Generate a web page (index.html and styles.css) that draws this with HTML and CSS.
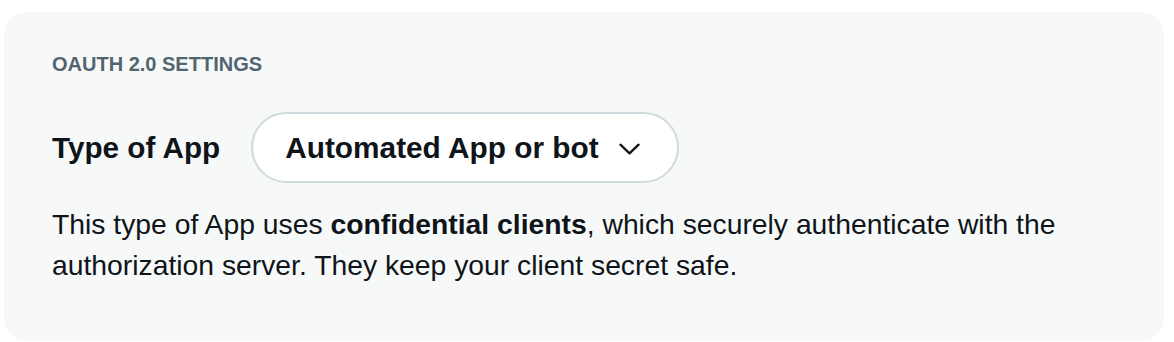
FILE: index.html
```html
<!DOCTYPE html>
<html lang="en">
<head>
  <meta charset="UTF-8">
  <meta name="viewport" content="width=device-width, initial-scale=1.0">
  <title>OAuth 2.0 Settings</title>
  <link rel="stylesheet" href="styles.css">
</head>
<body>

  <!-- Settings Card -->
  <section class="settings-card">
    <h2 class="section-title">OAUTH 2.0 SETTINGS</h2>

    <div class="app-type-row">
      <span class="app-type-label">Type of App</span>
      <button class="app-type-select">
        <span>Automated App or bot</span>
        <svg class="chevron" viewBox="0 0 22 12" width="21" height="12" aria-hidden="true">
          <path d="M1.5 1.5L11 10.5 20.5 1.5" fill="none" stroke="#0f1419" stroke-width="2.4" stroke-linecap="round" stroke-linejoin="round"/>
        </svg>
      </button>
    </div>

    <p class="app-type-desc">
      This type of App uses <strong>confidential clients</strong>, which securely authenticate with the
      authorization server. They keep your client secret safe.
    </p>
  </section>

</body>
</html>
```

FILE: styles.css
```css
/* Basic Reset */
* {
  margin: 0;
  padding: 0;
  box-sizing: border-box;
}

body {
  background-color: #fff;
  font-family: 'Liberation Sans', Arial, sans-serif;
  color: #0f1419;
  padding: 12px 10px 0 4px;
}

/* Settings Card */
.settings-card {
  background-color: #f7f9f9;
  border-radius: 22px;
  padding: 40px 60px 0 48px;
  height: 329px;
}

.section-title {
  font-size: 20px;
  font-weight: 700;
  line-height: 24px;
  color: #536471;
}

/* Type of App Row */
.app-type-row {
  display: flex;
  align-items: center;
  gap: 31px;
  margin-top: 36px;
}

.app-type-label {
  font-size: 29.7px;
  font-weight: 700;
}

.app-type-select {
  display: flex;
  align-items: center;
  gap: 20px;
  height: 71px;
  padding: 0 37px 0 32px;
  background-color: #fff;
  border: 2px solid #cfd9de;
  border-radius: 36px;
  font-family: inherit;
  font-size: 29.8px;
  font-weight: 700;
  color: #0f1419;
  cursor: pointer;
}

.chevron {
  display: block;
  margin-top: 2px;
}

/* Description */
.app-type-desc {
  margin-top: 21px;
  font-size: 28.3px;
  line-height: 41px;
}

.app-type-desc strong {
  font-weight: 700;
}
```
